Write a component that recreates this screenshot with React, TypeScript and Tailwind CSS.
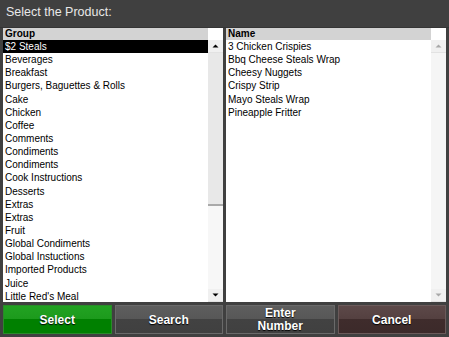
const groups = [
  "$2 Steals",
  "Beverages",
  "Breakfast",
  "Burgers, Baguettes & Rolls",
  "Cake",
  "Chicken",
  "Coffee",
  "Comments",
  "Condiments",
  "Condiments",
  "Cook Instructions",
  "Desserts",
  "Extras",
  "Extras",
  "Fruit",
  "Global Condiments",
  "Global Instuctions",
  "Imported Products",
  "Juice",
  "Little Red's Meal",
];

const products = [
  "3 Chicken Crispies",
  "Bbq Cheese Steals Wrap",
  "Cheesy Nuggets",
  "Crispy Strip",
  "Mayo Steals Wrap",
  "Pineapple Fritter",
];

function Arrow({ up, disabled }: { up?: boolean; disabled?: boolean }) {
  return (
    <div className="h-[13px] bg-[#f0f0f0] border-b border-[#e2e2e2] flex items-center justify-center">
      <svg width="7" height="5" viewBox="0 0 7 5">
        <path
          d={up ? "M3.5 0.5 L6.5 3.5 L0.5 3.5 Z" : "M0.5 0.5 L6.5 0.5 L3.5 3.5 Z"}
          fill={disabled ? "#a8a8a8" : "#000"}
        />
      </svg>
    </div>
  );
}

function ListPanel({
  title,
  items,
  selected,
  scrollable,
}: {
  title: string;
  items: string[];
  selected?: number;
  scrollable?: boolean;
}) {
  return (
    <div className="flex-1 bg-white flex overflow-hidden">
      <div className="flex-1 flex flex-col overflow-hidden">
        <div className="h-[12px] bg-[#d3d3d3] pl-[2px] text-[10px] leading-[12px] font-bold text-black">
          {title}
        </div>
        {items.map((item, i) => (
          <div
            key={i}
            className={
              i === selected
                ? "h-[13.15px] shrink-0 pl-[2px] text-[10px] leading-[13px] bg-black text-white whitespace-nowrap"
                : "h-[13.15px] shrink-0 pl-[2px] text-[10px] leading-[13px] text-black whitespace-nowrap"
            }
          >
            {item}
          </div>
        ))}
      </div>
      <div className="w-[15px] flex flex-col">
        <div className="h-[12px] bg-white" />
        <Arrow up disabled={!scrollable} />
        {scrollable ? (
          <div className="flex-1 bg-[#f7f7f7] flex flex-col">
            <div className="h-[153px] bg-[#e8e8e8] border-b-2 border-[#a9a9a9]" />
          </div>
        ) : (
          <div className="flex-1 bg-[#f5f5f5]" />
        )}
        <Arrow disabled={!scrollable} />
      </div>
    </div>
  );
}

export default function App() {
  return (
    <div className="w-[449px] h-[337px] bg-[#404040] flex flex-col font-['Liberation_Sans',Arial,sans-serif]">
      <div className="h-[28px] px-[6px] pb-[2px] flex items-center text-[12.5px] text-[#e8e8e8] border-b border-[#353535]">
        Select the Product:
      </div>

      <div className="h-[274px] flex gap-[3px] px-[3px]">
        <ListPanel title="Group" items={groups} selected={0} scrollable />
        <ListPanel title="Name" items={products} />
      </div>

      <div className="h-[29px] mt-[3px] grid grid-cols-4 gap-[3px] px-[3px]">
        <button className="flex items-center justify-center border border-[#2a8a2a] bg-[linear-gradient(#22a222_0%,#1c9a1c_50%,#008000_50%,#008000_100%)] text-white text-[12px] font-bold [text-shadow:0_1px_1px_#000]">
          Select
        </button>
        <button className="flex items-center justify-center border border-[#6a6a6a] bg-[linear-gradient(#5e5e5e_0%,#575757_50%,#424242_50%,#404040_100%)] text-white text-[12px] font-bold [text-shadow:0_1px_1px_#000]">
          Search
        </button>
        <button className="flex flex-col items-center justify-center border border-[#6a6a6a] bg-[linear-gradient(#5e5e5e_0%,#575757_50%,#424242_50%,#404040_100%)] text-white text-[12px] leading-[13px] font-bold [text-shadow:0_1px_1px_#000]">
          <span>Enter</span>
          <span>Number</span>
        </button>
        <button className="flex items-center justify-center border border-[#6a5a5a] bg-[linear-gradient(#5c4848_0%,#544040_50%,#3f2c2c_50%,#3c2a2a_100%)] text-white text-[12px] font-bold [text-shadow:0_1px_1px_#000]">
          Cancel
        </button>
      </div>
    </div>
  );
}
